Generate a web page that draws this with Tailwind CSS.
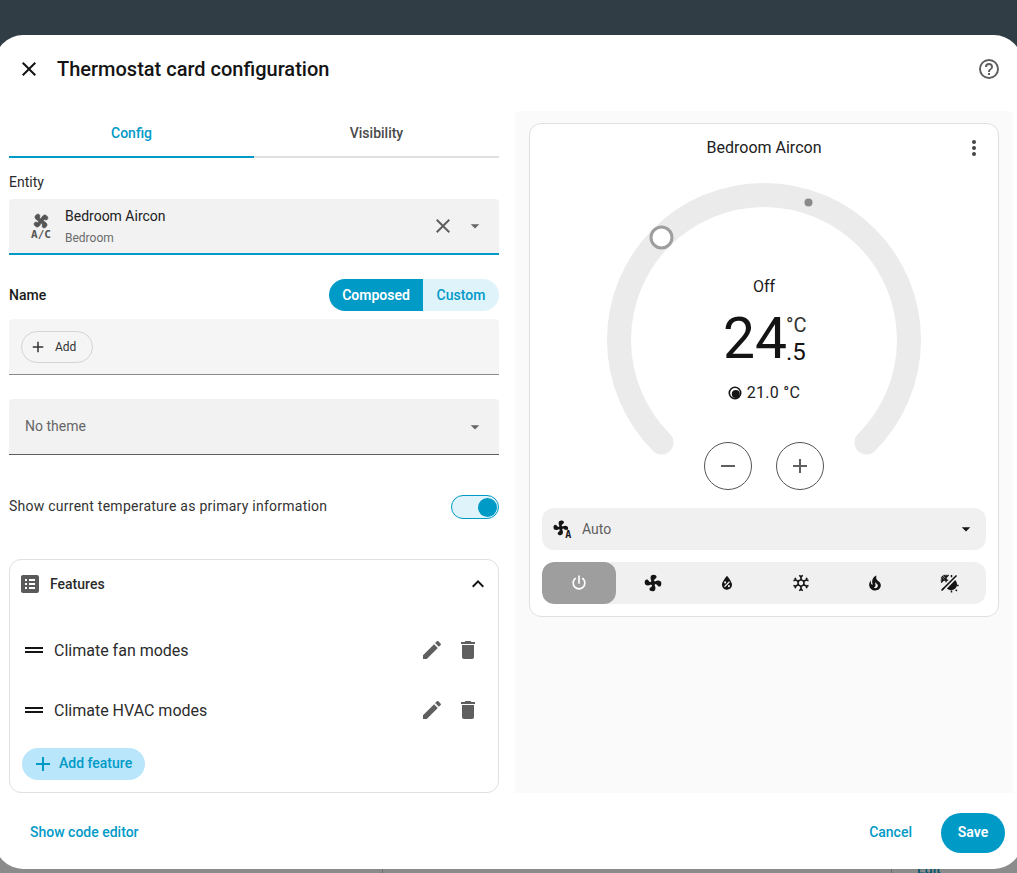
<!DOCTYPE html>
<html lang="en">
<head>
    <meta charset="UTF-8">
    <meta name="viewport" content="width=device-width, initial-scale=1.0">
    <title>Thermostat card configuration</title>
    <script src="https://cdn.jsdelivr.net/npm/@tailwindcss/browser@4"></script>
</head>
<body class="relative h-[873px] overflow-hidden bg-[linear-gradient(#303d44_50%,#8b8b8b_50%)] [font-family:Roboto,sans-serif] text-[#141414]">
    <!-- bits of the dashboard peeking out below the dialog -->
    <div class="absolute left-[382px] top-[869px] h-1 w-px bg-[#6f6f6f]"></div>
    <div class="absolute left-[891px] top-[869px] h-1 w-px bg-[#6f6f6f]"></div>
    <div class="absolute left-[917px] top-[859px] text-sm font-medium text-[#00566f]">Edit</div>

    <div class="relative ml-[-5px] mt-[35px] flex h-[834px] w-[1027px] flex-col rounded-[28px] bg-white pl-[5px] pr-[5px]">
        <!-- header -->
        <div class="flex h-[68px] shrink-0 items-center pl-[17px] pr-[16px]">
            <svg class="h-6 w-6 fill-[#141414]" viewBox="0 0 24 24"><path d="M19,6.41L17.59,5L12,10.59L6.41,5L5,6.41L10.59,12L5,17.59L6.41,19L12,13.41L17.59,19L19,17.59L13.41,12L19,6.41Z"/></svg>
            <h1 class="ml-4 flex-1 text-xl font-medium leading-[28px]">Thermostat card configuration</h1>
            <svg class="h-6 w-6 fill-[#5f5f5f]" viewBox="0 0 24 24"><path d="M11,18H13V16H11V18M12,2A10,10 0 0,0 2,12A10,10 0 0,0 12,22A10,10 0 0,0 22,12A10,10 0 0,0 12,2M12,20C7.59,20 4,16.41 4,12C4,7.59 7.59,4 12,4C16.41,4 20,7.59 20,12C20,16.41 16.41,20 12,20M12,6A4,4 0 0,0 8,10H10A2,2 0 0,1 12,8A2,2 0 0,1 14,10C14,12 11,11.75 11,15H13C13,12.75 16,12.5 16,10A4,4 0 0,0 12,6Z"/></svg>
        </div>

        <div class="mt-2 flex h-[682px] shrink-0 pl-[9px] pr-1">
            <!-- left column -->
            <div class="w-[490px] shrink-0">
                <div class="flex h-[47px] text-sm font-medium">
                    <div class="flex w-[245px] items-center justify-center border-b-2 border-[#009ac7] pb-[1px] text-[#009ac7]">Config</div>
                    <div class="flex w-[245px] items-center justify-center border-b-2 border-[#e0e0e0] pb-[1px] text-[#4a4a4a]">Visibility</div>
                </div>

                <div class="mt-[15px] h-[18px] text-sm leading-[18px] text-[#2b2b2b]">Entity</div>
                <div class="mt-[8px] flex h-14 items-center rounded-t-[4px] border-b-2 border-[#009ac7] bg-[#f2f2f2] pl-[20px] pr-[12px]">
                    <svg class="h-[30px] w-6 shrink-0" viewBox="0 0 24 30">
                        <path class="fill-[#555] stroke-[#555]" stroke-width="1.2" transform="translate(12,10) rotate(45) scale(0.76) translate(-12,-12)" d="M12.5,2C17,2 17.11,5.57 14.75,6.75C13.76,7.24 13.32,8.29 13.13,9.22C13.61,9.42 14.03,9.73 14.35,10.13C18.05,8.13 22.03,8.92 22.03,12.5C22.03,17 18.46,17.1 17.28,14.73C16.78,13.74 15.72,13.3 14.79,13.11C14.59,13.59 14.28,14 13.88,14.34C15.87,18.03 15.08,22 11.5,22C7,22 6.91,18.42 9.27,17.24C10.25,16.75 10.69,15.71 10.89,14.79C10.4,14.59 9.97,14.27 9.65,13.87C5.96,15.85 2,15.07 2,11.5C2,7 5.56,6.89 6.74,9.26C7.24,10.25 8.29,10.68 9.22,10.87C9.41,10.39 9.73,9.97 10.14,9.65C8.15,5.96 8.94,2 12.5,2Z"/>
                        <text x="12" y="26.5" text-anchor="middle" class="fill-[#555]" style="font:700 11px 'DejaVu Sans Mono',monospace">A/C</text>
                    </svg>
                    <div class="ml-[12px] flex-1">
                        <div class="text-sm leading-[20px] text-[#212121]">Bedroom Aircon</div>
                        <div class="mt-[4px] text-xs leading-[16px] text-[#6b6b6b]">Bedroom</div>
                    </div>
                    <svg class="h-6 w-6 fill-[#5f5f5f]" viewBox="0 0 24 24"><path d="M19,6.41L17.59,5L12,10.59L6.41,5L5,6.41L10.59,12L5,17.59L6.41,19L12,13.41L17.59,19L19,17.59L13.41,12L19,6.41Z"/></svg>
                    <svg class="ml-[8px] h-6 w-6 fill-[#666]" viewBox="0 0 24 24"><path d="M7,10L12,15L17,10H7Z" transform="translate(1.8,1.8) scale(0.85)"/></svg>
                </div>

                <div class="mt-6 flex h-8 items-center justify-between">
                    <span class="text-sm font-medium text-[#1a1a1a]">Name</span>
                    <div class="flex h-8 overflow-hidden rounded-full text-sm font-medium">
                        <div class="flex w-[94px] items-center justify-center bg-[#009ac7] font-semibold text-white">Composed</div>
                        <div class="flex w-[76px] items-center justify-center bg-[#dff3fb] text-[#009ac7]">Custom</div>
                    </div>
                </div>

                <div class="mt-2 flex h-14 items-center rounded-t-[4px] border-b border-[#8a8a8a] bg-[#f5f5f5] pl-[12px]">
                    <div class="flex h-8 w-[72px] items-center rounded-full border border-[#d4d4d4] pl-[7px] text-xs text-[#333]">
                        <svg class="h-[18px] w-[18px] fill-[#333]" viewBox="0 0 24 24"><path d="M19,13H13V19H11V13H5V11H11V5H13V11H19V13Z"/></svg>
                        <span class="ml-[8px]">Add</span>
                    </div>
                </div>

                <div class="mt-6 flex h-14 items-center justify-between rounded-t-[4px] border-b border-[#5f5f5f] bg-[#f2f2f2] pl-4 pr-[12px]">
                    <span class="pb-[2px] text-sm text-[#666]">No theme</span>
                    <svg class="h-6 w-6 fill-[#666]" viewBox="0 0 24 24"><path d="M7,10L12,15L17,10H7Z" transform="translate(1.8,1.8) scale(0.85)"/></svg>
                </div>

                <div class="mt-10 flex h-6 items-center justify-between">
                    <span class="pb-[2px] text-sm tracking-[0.25px] text-[#333]">Show current temperature as primary information</span>
                    <div class="relative h-6 w-12 rounded-full border border-[#009ac7] bg-[#dff3fb]">
                        <div class="absolute right-[1px] top-[1.5px] h-[19px] w-[19px] rounded-full bg-[#009ac7]"></div>
                    </div>
                </div>

                <!-- features card -->
                <div class="mt-10 h-[234px] rounded-xl border border-[#e0e0e0]">
                    <div class="flex h-12 items-center pl-2 pr-2">
                        <svg class="h-6 w-6 fill-[#5a5a5a]" viewBox="0 0 24 24"><path d="M19 3H5C3.9 3 3 3.9 3 5V19C3 20.1 3.9 21 5 21H19C20.1 21 21 20.1 21 19V5C21 3.9 20.1 3 19 3M7 7H9V9H7V7M7 11H9V13H7V11M7 15H9V17H7V15M17 17H11V15H17V17M17 13H11V11H17V13M17 9H11V7H17V9Z"/></svg>
                        <span class="ml-2 flex-1 text-sm font-medium text-[#2b2b2b]">Features</span>
                        <svg class="h-6 w-6 fill-[#141414]" viewBox="0 0 24 24"><path d="M7.41,15.41L12,10.83L16.59,15.41L18,14L12,8L6,14L7.41,15.41Z"/></svg>
                    </div>
                    <div class="mt-[12px] flex h-[60px] items-center pl-[12px] pr-[18px]">
                        <svg class="h-6 w-6 fill-[#141414]" viewBox="0 0 24 24"><path d="M21 11H3V9H21V11M21 13H3V15H21V13Z"/></svg>
                        <span class="ml-2 flex-1 pt-[2px] text-base text-[#2b2b2b]">Climate fan modes</span>
                        <svg class="h-6 w-6 fill-[#5f5f5f]" viewBox="0 0 24 24"><path d="M20.71,7.04C21.1,6.65 21.1,6 20.71,5.63L18.37,3.29C18,2.9 17.35,2.9 16.96,3.29L15.12,5.12L18.87,8.87M3,17.25V21H6.75L17.81,9.93L14.06,6.18L3,17.25Z"/></svg>
                        <svg class="ml-[12px] h-6 w-6 fill-[#5f5f5f]" viewBox="0 0 24 24"><path d="M19,4H15.5L14.5,3H9.5L8.5,4H5V6H19M6,19A2,2 0 0,0 8,21H16A2,2 0 0,0 18,19V7H6V19Z"/></svg>
                    </div>
                    <div class="flex h-[60px] items-center pl-[12px] pr-[18px]">
                        <svg class="h-6 w-6 fill-[#141414]" viewBox="0 0 24 24"><path d="M21 11H3V9H21V11M21 13H3V15H21V13Z"/></svg>
                        <span class="ml-2 flex-1 pt-[2px] text-base text-[#2b2b2b]">Climate HVAC modes</span>
                        <svg class="h-6 w-6 fill-[#5f5f5f]" viewBox="0 0 24 24"><path d="M20.71,7.04C21.1,6.65 21.1,6 20.71,5.63L18.37,3.29C18,2.9 17.35,2.9 16.96,3.29L15.12,5.12L18.87,8.87M3,17.25V21H6.75L17.81,9.93L14.06,6.18L3,17.25Z"/></svg>
                        <svg class="ml-[12px] h-6 w-6 fill-[#5f5f5f]" viewBox="0 0 24 24"><path d="M19,4H15.5L14.5,3H9.5L8.5,4H5V6H19M6,19A2,2 0 0,0 8,21H16A2,2 0 0,0 18,19V7H6V19Z"/></svg>
                    </div>
                    <div class="ml-[12px] mt-[8px] flex h-8 w-[123px] items-center rounded-full bg-[#b9e6fb] pl-[9px] text-sm font-medium text-[#009ac7]">
                        <svg class="h-6 w-6 fill-[#009ac7]" viewBox="0 0 24 24"><path d="M19,13H13V19H11V13H5V11H11V5H13V11H19V13Z"/></svg>
                        <span class="ml-[4px] pb-[2px]">Add feature</span>
                    </div>
                </div>
            </div>

            <!-- preview panel -->
            <div class="ml-4 flex-1 rounded-t-[4px] bg-[#fafafa] pl-[14px] pr-[14px] pt-[12px]">
                <div class="h-[494px] rounded-xl border border-[#e0e0e0] bg-white px-3">
                    <div class="relative flex h-[47px] items-center justify-center text-base text-[#212121]">
                        Bedroom Aircon
                        <svg class="absolute right-0 top-[12px] h-6 w-6 fill-[#444]" viewBox="0 0 24 24"><path d="M12,16A2,2 0 0,1 14,18A2,2 0 0,1 12,20A2,2 0 0,1 10,18A2,2 0 0,1 12,16M12,10A2,2 0 0,1 14,12A2,2 0 0,1 12,14A2,2 0 0,1 10,12A2,2 0 0,1 12,10M12,4A2,2 0 0,1 14,6A2,2 0 0,1 12,8A2,2 0 0,1 10,6A2,2 0 0,1 12,4Z"/></svg>
                    </div>

                    <!-- climate dial -->
                    <div class="relative mx-auto h-[337px] w-[320px]">
                        <svg class="absolute left-0 top-[9px] h-[320px] w-[320px]" viewBox="0 0 320 320">
                            <path d="M57.5,262.5 A145,145 0 1 1 262.5,262.5" fill="none" stroke="#ebebeb" stroke-width="24" stroke-linecap="round"/>
                            <circle cx="204.5" cy="22.5" r="4" fill="#8a8a8a"/>
                            <circle cx="57.5" cy="57.5" r="10.5" fill="#fff" stroke="#9e9e9e" stroke-width="3"/>
                        </svg>
                        <div class="absolute left-0 top-[106px] w-full text-center text-base leading-[20px] text-[#1a1a1a]">Off</div>
                        <div class="absolute left-[119px] top-[132px] text-[57px] leading-[72px] text-[#141414]">24</div>
                        <div class="absolute left-[182px] top-[142px] text-xl leading-[24px] text-[#333]">°C</div>
                        <div class="absolute left-[182px] top-[167px] text-2xl leading-[28px] text-[#141414]">.5</div>
                        <div class="absolute left-0 top-[210px] flex w-full items-center justify-center text-base tracking-[0.25px] text-[#212121]">
                            <svg class="mr-[5px] h-[14px] w-[14px]" viewBox="0 0 14 14"><circle cx="7" cy="7" r="5.7" fill="none" stroke="#141414" stroke-width="1.6"/><circle cx="7.8" cy="8" r="4" fill="#141414"/></svg>
                            21.0 °C
                        </div>
                        <div class="absolute left-[100px] top-[271px] flex gap-6">
                            <div class="flex h-12 w-12 items-center justify-center rounded-full border border-[#555]">
                                <svg class="h-6 w-6 fill-[#5f5f5f]" viewBox="0 0 24 24"><path d="M19,13H5V11H19V13Z"/></svg>
                            </div>
                            <div class="flex h-12 w-12 items-center justify-center rounded-full border border-[#555]">
                                <svg class="h-6 w-6 fill-[#5f5f5f]" viewBox="0 0 24 24"><path d="M19,13H13V19H11V13H5V11H11V5H13V11H19V13Z"/></svg>
                            </div>
                        </div>
                    </div>

                    <!-- fan mode select -->
                    <div class="flex h-[42px] items-center rounded-xl bg-[#f0f0f0] pl-[10px] pr-[8px]">
                        <svg class="h-5 w-5 fill-[#141414]" viewBox="0 0 24 24">
                            <path transform="scale(0.88)" d="M12.5,2C17,2 17.11,5.57 14.75,6.75C13.76,7.24 13.32,8.29 13.13,9.22C13.61,9.42 14.03,9.73 14.35,10.13C18.05,8.13 22.03,8.92 22.03,12.5C22.03,17 18.46,17.1 17.28,14.73C16.78,13.74 15.72,13.3 14.79,13.11C14.59,13.59 14.28,14 13.88,14.34C15.87,18.03 15.08,22 11.5,22C7,22 6.91,18.42 9.27,17.24C10.25,16.75 10.69,15.71 10.89,14.79C10.4,14.59 9.97,14.27 9.65,13.87C5.96,15.85 2,15.07 2,11.5C2,7 5.56,6.89 6.74,9.26C7.24,10.25 8.29,10.68 9.22,10.87C9.41,10.39 9.73,9.97 10.14,9.65C8.15,5.96 8.94,2 12.5,2Z"/>
                            <rect x="15" y="13" width="9" height="11" fill="#f0f0f0"/>
                            <text x="19.5" y="22.5" text-anchor="middle" style="font:700 12px 'DejaVu Sans Mono',monospace">A</text>
                        </svg>
                        <span class="ml-[10px] flex-1 text-sm text-[#5f5f5f]">Auto</span>
                        <svg class="h-6 w-6 fill-[#141414]" viewBox="0 0 24 24"><path d="M7,10L12,15L17,10H7Z" transform="translate(1.8,1.8) scale(0.85)"/></svg>
                    </div>

                    <!-- hvac modes -->
                    <div class="mt-3 grid h-[42px] grid-cols-6 overflow-hidden rounded-xl bg-[#f0f0f0]">
                        <div class="flex items-center justify-center rounded-xl bg-[#9e9e9e]">
                            <svg class="h-5 w-5 fill-white" viewBox="0 0 24 24"><path d="M16.56,5.44L15.11,6.89C16.84,7.94 18,9.83 18,12A6,6 0 0,1 12,18A6,6 0 0,1 6,12C6,9.83 7.16,7.94 8.88,6.88L7.44,5.44C5.36,6.88 4,9.28 4,12A8,8 0 0,0 12,20A8,8 0 0,0 20,12C20,9.28 18.64,6.88 16.56,5.44M13,3H11V13H13"/></svg>
                        </div>
                        <div class="flex items-center justify-center">
                            <svg class="h-5 w-5 fill-[#141414]" viewBox="0 0 24 24"><path d="M12.5,2C17,2 17.11,5.57 14.75,6.75C13.76,7.24 13.32,8.29 13.13,9.22C13.61,9.42 14.03,9.73 14.35,10.13C18.05,8.13 22.03,8.92 22.03,12.5C22.03,17 18.46,17.1 17.28,14.73C16.78,13.74 15.72,13.3 14.79,13.11C14.59,13.59 14.28,14 13.88,14.34C15.87,18.03 15.08,22 11.5,22C7,22 6.91,18.42 9.27,17.24C10.25,16.75 10.69,15.71 10.89,14.79C10.4,14.59 9.97,14.27 9.65,13.87C5.96,15.85 2,15.07 2,11.5C2,7 5.56,6.89 6.74,9.26C7.24,10.25 8.29,10.68 9.22,10.87C9.41,10.39 9.73,9.97 10.14,9.65C8.15,5.96 8.94,2 12.5,2Z"/></svg>
                        </div>
                        <div class="flex items-center justify-center">
                            <svg class="h-5 w-5 fill-[#141414]" viewBox="0 0 24 24"><path fill-rule="evenodd" d="M12,3.25C12,3.25 6,10 6,14C6,17.32 8.69,20 12,20A6,6 0 0,0 18,14C18,10 12,3.25 12,3.25M14.47,9.97L15.53,11.03L9.53,17.03L8.47,15.97M9.75,10A1.25,1.25 0 0,1 11,11.25A1.25,1.25 0 0,1 9.75,12.5A1.25,1.25 0 0,1 8.5,11.25A1.25,1.25 0 0,1 9.75,10M14.25,14.5A1.25,1.25 0 0,1 15.5,15.75A1.25,1.25 0 0,1 14.25,17A1.25,1.25 0 0,1 13,15.75A1.25,1.25 0 0,1 14.25,14.5Z"/></svg>
                        </div>
                        <div class="flex items-center justify-center">
                            <svg class="h-5 w-5 fill-[#141414]" viewBox="0 0 24 24"><path d="M20.79,13.95L18.46,14.57L16.46,13.44V10.56L18.46,9.43L20.79,10.05L21.31,8.12L19.54,7.65L20,5.88L18.07,5.36L17.45,7.69L15.45,8.82L13,7.38V5.12L14.71,3.41L13.29,2L12,3.29L10.71,2L9.29,3.41L11,5.12V7.38L8.5,8.82L6.5,7.69L5.92,5.36L4,5.88L4.47,7.65L2.7,8.12L3.22,10.05L5.55,9.43L7.55,10.56V13.45L5.55,14.58L3.22,13.96L2.7,15.89L4.47,16.36L4,18.12L5.93,18.64L6.55,16.31L8.55,15.18L11,16.62V18.88L9.29,20.59L10.71,22L12,20.71L13.29,22L14.7,20.59L13,18.88V16.62L15.5,15.17L17.5,16.3L18.12,18.63L20,18.12L19.53,16.35L21.3,15.88L20.79,13.95M9.5,10.56L12,9.11L14.5,10.56V13.44L12,14.89L9.5,13.44V10.56Z"/></svg>
                        </div>
                        <div class="flex items-center justify-center">
                            <svg class="h-5 w-5 fill-[#141414]" viewBox="0 0 24 24"><path d="M17.66 11.2C17.43 10.9 17.15 10.64 16.89 10.38C16.22 9.78 15.46 9.35 14.82 8.72C13.33 7.26 13 4.85 13.95 3C13 3.23 12.17 3.75 11.46 4.32C8.87 6.4 7.85 10.07 9.07 13.22C9.11 13.32 9.15 13.42 9.15 13.55C9.15 13.77 9 13.97 8.8 14.05C8.57 14.15 8.33 14.09 8.14 13.93C8.08 13.88 8.04 13.83 8 13.76C6.87 12.33 6.69 10.28 7.45 8.64C5.78 10 4.87 12.3 5 14.47C5.06 14.97 5.12 15.47 5.29 15.97C5.43 16.57 5.7 17.17 6 17.7C7.08 19.43 8.95 20.67 10.96 20.92C13.1 21.19 15.39 20.8 17.03 19.32C18.86 17.66 19.5 15 18.56 12.72L18.43 12.46C18.22 12 17.66 11.2 17.66 11.2M14.5 17.5C14.22 17.74 13.76 18 13.4 18.1C12.28 18.5 11.16 17.94 10.5 17.28C11.69 17 12.4 16.12 12.61 15.23C12.78 14.43 12.46 13.77 12.33 13C12.21 12.26 12.23 11.63 12.5 10.94C12.69 11.32 12.89 11.7 13.13 12C13.9 13 15.11 13.44 15.37 14.8C15.41 14.94 15.43 15.08 15.43 15.23C15.46 16.05 15.1 16.95 14.5 17.5H14.5Z"/></svg>
                        </div>
                        <div class="flex items-center justify-center">
                            <svg class="h-5 w-5" viewBox="0 0 24 24">
                                <g stroke="#141414" fill="none">
                                    <path d="M3,21L21,3" stroke-width="2"/>
                                    <path d="M8.5,2V11M2,8.5H11M3.5,3.5L8.5,8.5M5.5,2.5L8.5,5.5L11.5,2.5M2.5,5.5L5.5,8.5L2.5,11.5" stroke-width="1.6"/>
                                    <path d="M15,5V2.5M21,15H23.5M15,21V23.5M20,20L21.5,21.5M6,18L4.5,19.5" stroke-width="1.8"/>
                                </g>
                                <path d="M19.5,8.5A6,6 0 0 1 9.5,18.5Z" fill="#141414"/>
                            </svg>
                        </div>
                    </div>
                </div>
            </div>
        </div>

        <!-- footer -->
        <div class="flex flex-1 items-center pl-[30px] pr-[12px] pt-[3px] text-sm font-medium text-[#009ac7]">
            <span class="flex-1 pb-[2px]">Show code editor</span>
            <span class="pb-[2px]">Cancel</span>
            <div class="ml-[29px] flex h-10 w-16 items-center justify-center rounded-full bg-[#009ac7] pb-[2px] font-semibold text-white">Save</div>
        </div>
    </div>
</body>
</html>
